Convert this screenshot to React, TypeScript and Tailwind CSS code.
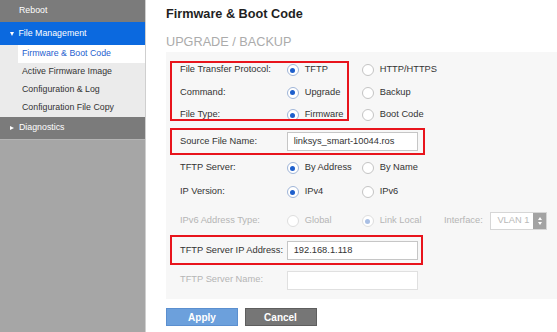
import type { ReactNode } from 'react'

const font = { fontFamily: '"Liberation Sans", Arial, sans-serif' }

function Radio({ checked, disabled }: { checked?: boolean; disabled?: boolean }) {
  return (
    <span
      className={`flex h-[12px] w-[12px] shrink-0 items-center justify-center rounded-full border bg-white ${
        disabled ? 'border-[#dedede]' : checked ? 'border-[#9fb5d8]' : 'border-[#c4c4c4]'
      }`}
    >
      {checked && (
        <span
          className={`h-[5px] w-[5px] rounded-full ${disabled ? 'bg-[#a9bfe4]' : 'bg-[#1e5fcc]'}`}
        />
      )}
    </span>
  )
}

function Option({
  label,
  checked,
  disabled,
  width = 'w-[75px]',
}: {
  label: string
  checked?: boolean
  disabled?: boolean
  width?: string
}) {
  return (
    <div className={`flex shrink-0 items-center gap-[6px] ${width}`}>
      <Radio checked={checked} disabled={disabled} />
      <span className={disabled ? 'text-[#b5b5b5]' : 'text-[#333]'}>{label}</span>
    </div>
  )
}

function Row({
  label,
  disabled,
  className = 'h-[22.5px]',
  children,
}: {
  label: string
  disabled?: boolean
  className?: string
  children: ReactNode
}) {
  return (
    <div className={`flex items-center pl-[14px] ${className}`}>
      <span className={`w-[106.7px] shrink-0 ${disabled ? 'text-[#b5b5b5]' : 'text-[#333]'}`}>
        {label}
      </span>
      {children}
    </div>
  )
}

function RedBox({ className }: { className: string }) {
  return <div className={`pointer-events-none absolute border-2 border-[#e8141c] ${className}`} />
}

function TextBox({ value, disabled }: { value?: string; disabled?: boolean }) {
  return (
    <div
      className={`flex h-[19px] w-[131.7px] items-center border bg-white px-[6px] text-[#333] ${
        disabled ? 'border-[#e0e0e0]' : 'border-[#c6c6c6]'
      }`}
    >
      {value}
    </div>
  )
}

const subItems = ['Firmware & Boot Code', 'Active Firmware Image', 'Configuration & Log', 'Configuration File Copy']

function Sidebar() {
  return (
    <aside className="flex w-[146px] shrink-0 flex-col border-r border-[#cfcfcf] bg-[#a6a6a6] text-[8.8px]">
      <div className="flex h-[22px] items-center bg-[#7b7b7b] pl-[19px] text-white">Reboot</div>
      <div className="flex h-[23px] items-center bg-[#0b69df] text-white">
        <span className="ml-[9.5px] mr-[5px] h-0 w-0 border-x-[2.5px] border-t-[4px] border-x-transparent border-t-white" />
        File Management
      </div>
      <div className="bg-[#ebebeb]">
        {subItems.map((item, i) => (
          <div key={item} className="flex h-[18px] items-center">
            <div
              className={`ml-[18px] flex h-full flex-1 items-center pl-[4px] ${
                i === 0 ? 'bg-white text-[#1f5fcf]' : 'text-[#333]'
              }`}
            >
              {item}
            </div>
          </div>
        ))}
      </div>
      <div className="flex h-[22px] items-center bg-[#7b7b7b] text-white">
        <span className="ml-[10px] mr-[5px] h-0 w-0 border-y-[2.5px] border-l-[4px] border-y-transparent border-l-white" />
        Diagnostics
      </div>
      <div className="flex-1 border-t border-[#b4b4b4]" />
    </aside>
  )
}

export default function App() {
  return (
    <div className="flex h-[332px] w-[557px] overflow-hidden bg-white" style={font}>
      <Sidebar />
      <main className="flex min-w-0 flex-1 flex-col pl-[20px]">
        <h1 className="mt-[6px] h-[16px] text-[12.7px] font-bold leading-[16px] text-[#1f1f1f]">
          Firmware &amp; Boot Code
        </h1>
        <h2 className="mt-[12px] h-[16px] text-[12.7px] leading-[16px] text-[#ababab]">
          UPGRADE / BACKUP
        </h2>
        <section className="mt-[2px] h-[247px] bg-[#f7f7f7] text-[9.3px]">
          <div className="relative mt-[6.75px]">
            <RedBox className="left-[4px] top-[2px] bottom-[5px] w-[179px]" />
            <Row label="File Transfer Protocol:">
              <Option label="TFTP" checked />
              <Option label="HTTP/HTTPS" />
            </Row>
            <Row label="Command:">
              <Option label="Upgrade" checked />
              <Option label="Backup" />
            </Row>
            <Row label="File Type:">
              <Option label="Firmware" checked />
              <Option label="Boot Code" />
            </Row>
          </div>

          <div className="relative mt-[2.25px]">
            <RedBox className="left-[4px] -top-[0.5px] -bottom-[0.5px] w-[255px]" />
            <Row label="Source File Name:" className="h-[26px]">
              <TextBox value="linksys_smart-10044.ros" />
            </Row>
          </div>

          <Row label="TFTP Server:" className="mt-[2.5px] h-[22px]">
            <Option label="By Address" checked />
            <Option label="By Name" />
          </Row>
          <Row label="IP Version:" className="mt-[2px] h-[22px]">
            <Option label="IPv4" checked />
            <Option label="IPv6" />
          </Row>
          <Row label="IPv6 Address Type:" disabled className="mt-[7px] h-[22px]">
            <Option label="Global" disabled />
            <Option label="Link Local" checked disabled width="w-[82.3px]" />
            <span className="w-[46.4px] shrink-0 text-[#b5b5b5]">Interface:</span>
            <div className="flex h-[18px] w-[57px] border border-[#d6d6d6] bg-white">
              <span className="flex flex-1 items-center pl-[6px] text-[#b9b9b9]">VLAN 1</span>
              <span className="flex w-[13px] flex-col items-center justify-center gap-[2px] bg-[#a3a3a3]">
                <span className="h-0 w-0 border-x-[2.5px] border-b-[3px] border-x-transparent border-b-white" />
                <span className="h-0 w-0 border-x-[2.5px] border-t-[3px] border-x-transparent border-t-white" />
              </span>
            </div>
          </Row>

          <div className="relative mt-[5.5px]">
            <RedBox className="left-[4px] -top-[2.5px] -bottom-[1px] w-[253px]" />
            <Row label="TFTP Server IP Address:" className="h-[26px]">
              <TextBox value="192.168.1.118" />
            </Row>
          </div>

          <Row label="TFTP Server Name:" disabled className="mt-[5.5px] h-[22px]">
            <TextBox disabled />
          </Row>
        </section>

        <div className="mt-[9px] flex gap-[6.5px] text-[10px] font-bold text-white">
          <button className="h-[18px] w-[72px] border border-[#5b8fcf] bg-[#6ca0dc]">Apply</button>
          <button className="h-[18px] w-[72px] border border-[#5e5e5e] bg-[#767676]">Cancel</button>
        </div>
      </main>
    </div>
  )
}
